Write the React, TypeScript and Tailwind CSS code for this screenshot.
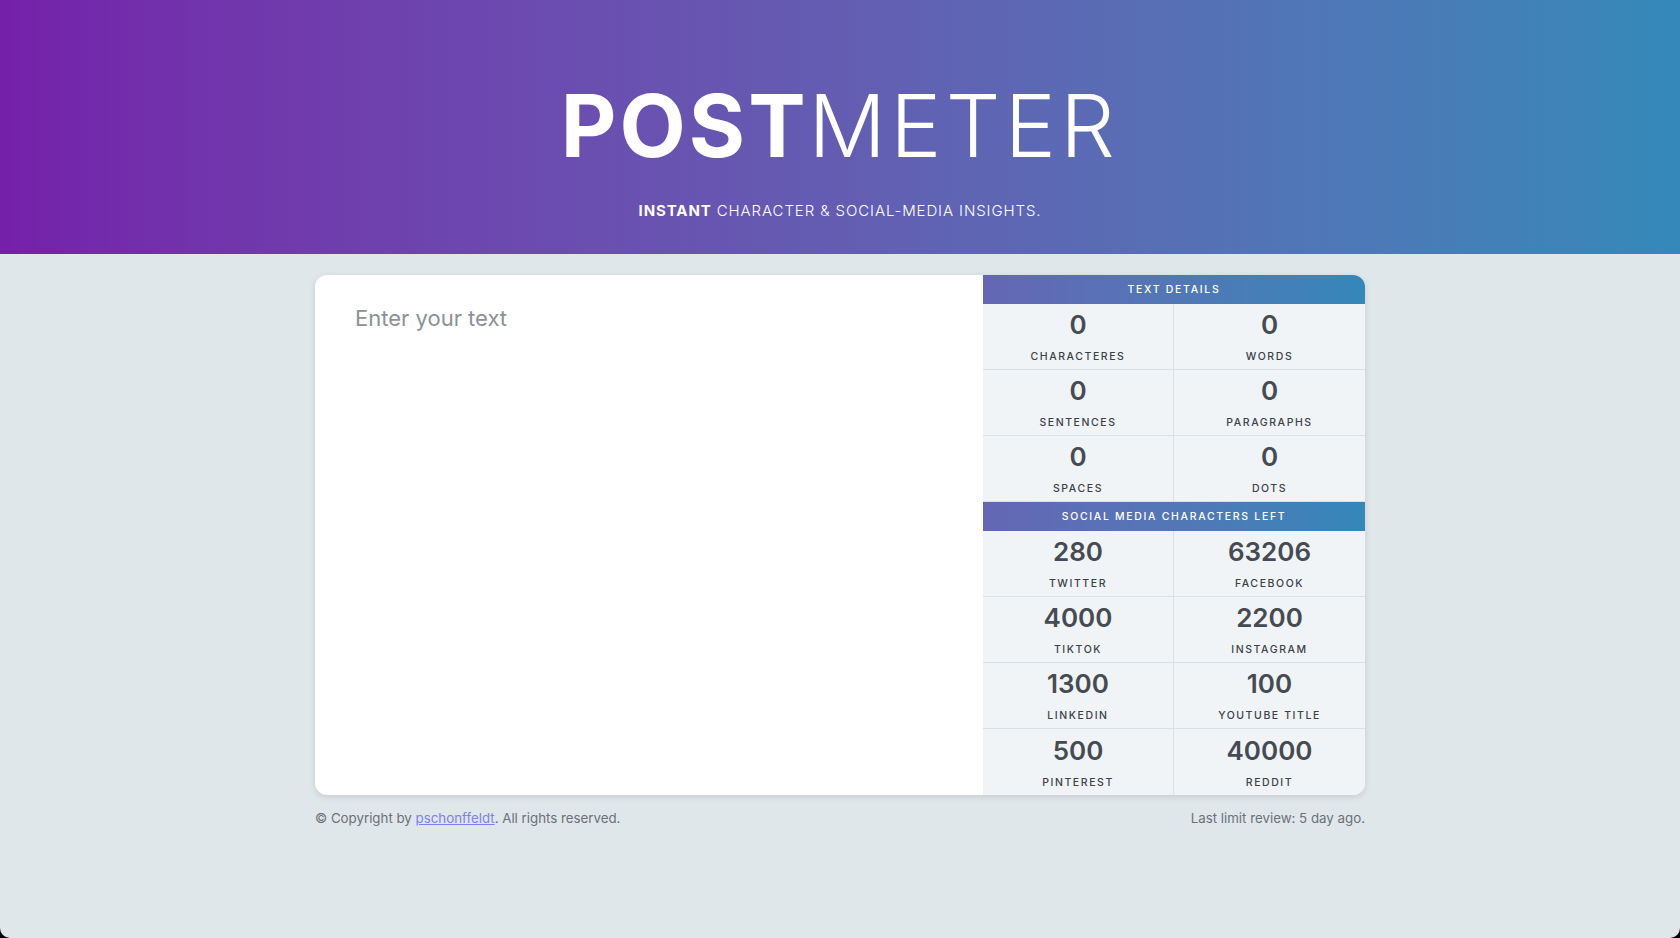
import React, { useState } from "react";

type Stat = { value: number; label: string };

const SOCIAL_LIMITS: Stat[] = [
    { value: 280, label: "Twitter" },
    { value: 63206, label: "Facebook" },
    { value: 4000, label: "TikTok" },
    { value: 2200, label: "Instagram" },
    { value: 1300, label: "LinkedIn" },
    { value: 100, label: "YouTube Title" },
    { value: 500, label: "Pinterest" },
    { value: 40000, label: "Reddit" },
];

function countStats(text: string): Stat[] {
    const trimmed = text.trim();
    const words = trimmed ? trimmed.split(/\s+/).length : 0;
    const sentences = trimmed ? (trimmed.match(/[^.!?]+[.!?]*/g) || []).length : 0;
    const paragraphs = trimmed ? trimmed.split(/\n\s*\n/).filter((p) => p.trim()).length : 0;
    return [
        { value: text.length, label: "Characteres" },
        { value: words, label: "Words" },
        { value: sentences, label: "Sentences" },
        { value: paragraphs, label: "Paragraphs" },
        { value: (text.match(/ /g) || []).length, label: "Spaces" },
        { value: (text.match(/\./g) || []).length, label: "Dots" },
    ];
}

function SectionTitle({ children }: { children: React.ReactNode }) {
    return (
        <div className="h-[29px] pt-px flex items-center justify-center bg-gradient-to-r from-[#6466b4] to-[#3387b9] text-white text-[10.5px] font-medium uppercase tracking-[0.16em]">
            {children}
        </div>
    );
}

function StatGrid({ stats, last }: { stats: Stat[]; last?: boolean }) {
    return (
        <div className="grid grid-cols-2">
            {stats.map((s, i) => {
                const bottomRow = last && i >= stats.length - 2;
                return (
                    <div
                        key={s.label}
                        className={
                            "h-[66px] pt-[2px] flex flex-col items-center justify-center gap-[14px] bg-[#f0f4f7] border-[#dae1e6] " +
                            (i % 2 === 0 ? "border-r " : "") +
                            (bottomRow ? "" : "border-b")
                        }
                    >
                        <span className="text-[26px] leading-none font-semibold text-[#454b52]">{s.value}</span>
                        <span className="text-[10.5px] leading-none font-medium uppercase tracking-[0.15em] text-[#3b4147]">
                            {s.label}
                        </span>
                    </div>
                );
            })}
        </div>
    );
}

export default function App() {
    const [text, setText] = useState("");
    const stats = countStats(text);
    const social = SOCIAL_LIMITS.map((s) => ({ ...s, value: s.value - text.length }));

    return (
        <div className="bg-black font-['Inter',sans-serif]">
            <div className="min-h-[938px] bg-[#e0e7ea] rounded-b-[10px] overflow-hidden">
                <header className="h-[254px] pt-[83px] flex flex-col items-center bg-gradient-to-r from-[#7420aa] to-[#3389b9] text-white">
                    <h1 className="text-[86px] leading-none">
                        <span className="font-bold tracking-[0.035em]">POST</span>
                        <span className="font-light tracking-[0.05em]">METER</span>
                    </h1>
                    <p className="mt-[30px] text-[15px] leading-6 tracking-[0.06em] uppercase font-light">
                        <span className="font-bold">Instant</span> character &amp; social-media insights.
                    </p>
                </header>

                <main className="w-[1050px] mx-auto mt-[21px]">
                    <div className="flex bg-white rounded-xl overflow-hidden shadow-[0_2px_6px_rgba(0,0,0,0.12)]">
                        <textarea
                            value={text}
                            onChange={(e) => setText(e.target.value)}
                            placeholder="Enter your text"
                            className="flex-1 resize-none outline-none px-10 pt-[29px] text-[22px] leading-7 text-[#3b4147] placeholder:text-[#8b9197]"
                        />
                        <aside className="w-[382px]">
                            <SectionTitle>Text Details</SectionTitle>
                            <StatGrid stats={stats} />
                            <SectionTitle>Social Media Characters Left</SectionTitle>
                            <StatGrid stats={social} last />
                        </aside>
                    </div>

                    <footer className="mt-[13px] flex justify-between text-[13.3px] leading-5 text-[#6b7177]">
                        <p>
                            © Copyright by{" "}
                            <a href="#" className="text-[#7b7ff0] underline">
                                pschonffeldt
                            </a>
                            . All rights reserved.
                        </p>
                        <p>Last limit review: 5 day ago.</p>
                    </footer>
                </main>
            </div>
        </div>
    );
}
